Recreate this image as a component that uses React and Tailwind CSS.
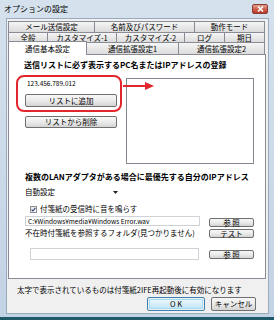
import React from "react";

const btn =
  "flex items-center justify-center border border-[#707070] rounded-[2px] bg-linear-to-b from-[#f7f7f7] via-[#ebebeb] to-[#d4d4d4] leading-none";
const tabOff =
  "flex items-center justify-center border-t border-r border-[#898c95] bg-linear-to-b from-[#f5f5f5] to-[#dcdcdc] leading-none";

function Tab({ className, children }) {
  return <div className={`${tabOff} ${className}`}>{children}</div>;
}

export default function App() {
  return (
    <div className="w-[274px] h-[320px] flex flex-col overflow-hidden bg-linear-to-b from-[#d5e1ed] to-[#c2d3e5] text-black text-[7.5px] font-['Noto_Sans_CJK_JP','Noto_Sans_CJK_SC',sans-serif]">
      {/* title bar */}
      <div className="h-[18px] flex items-start pl-[4px] pr-[6px]">
        <span className="mt-[3px] text-[8px] leading-[12px]">オプションの設定</span>
        <div className="ml-auto mt-[4px] w-[16px] h-[10px] rounded-[2px] border border-[#8a3a30] bg-linear-to-b from-[#e2a08f] via-[#d0624f] to-[#b83b28] flex items-center justify-center">
          <svg width="7" height="6" viewBox="0 0 7 6">
            <path d="M1 0.5 L6 5.5 M6 0.5 L1 5.5" stroke="white" strokeWidth="1.6" />
          </svg>
        </div>
      </div>

      {/* client area */}
      <div className="h-[296px] ml-[6px] mr-[5px] border border-[#9aabbd] bg-[#f0f0f0] flex flex-col">
        <div className="pt-[2px] pl-[1px] flex flex-col">
          <div className="flex h-[11px]">
            <Tab className="w-[87px] border-l">メール送信設定</Tab>
            <Tab className="w-[100px]">名前及びパスワード</Tab>
            <Tab className="w-[70px]">動作モード</Tab>
          </div>
          <div className="flex h-[10px]">
            <Tab className="w-[40px] border-l">全般</Tab>
            <Tab className="w-[69px]">カスタマイズ-1</Tab>
            <Tab className="w-[68px]">カスタマイズ-2</Tab>
            <Tab className="w-[40px]">ログ</Tab>
            <Tab className="w-[40px]">期日</Tab>
          </div>
          <div className="flex h-[12px] items-end">
            <div className="relative z-10 w-[79px] h-[14px] -mb-px bg-white border-t border-l border-r border-[#898c95] flex items-center justify-center leading-none">
              通信基本設定
            </div>
            <Tab className="w-[92px] h-[12px]">通信拡張設定1</Tab>
            <Tab className="w-[86px] h-[12px]">通信拡張設定2</Tab>
          </div>
        </div>

        {/* tab page */}
        <div className="relative ml-[1px] mr-[2px] h-[225px] border border-[#898c95] bg-white flex flex-col">
          <div className="mt-[4px] pl-[15px] leading-[11px] text-[8px] font-bold whitespace-nowrap">
            送信リストに必ず表示するPC名またはIPアドレスの登録
          </div>
          <div className="mt-[8px] flex">
            <div className="ml-[13px] w-[95px] flex flex-col">
              <div className="h-[12px] flex items-center pl-[5px] text-[6.5px]">123.456.789.012</div>
              <div className={`${btn} mt-[4px] h-[13px] ml-[3px]`}>リストに追加</div>
              <div className={`${btn} mt-[9px] h-[12px] ml-[3px]`}>リストから削除</div>
            </div>
            <div className="ml-[9px] w-[128px] h-[86px] border border-[#828790] bg-white" />
          </div>

          <div className="mt-[7px] pl-[16px] leading-[11px] text-[8px] font-bold whitespace-nowrap">
            複数のLANアダプタがある場合に最優先する自分のIPアドレス
          </div>
          <div className="mt-[5px] ml-[16px] w-[95px] h-[10px] flex items-center">
            <span className="leading-none">自動設定</span>
            <svg className="ml-auto mr-[2px]" width="5" height="3" viewBox="0 0 5 3">
              <path d="M0 0 H5 L2.5 3 Z" fill="#222" />
            </svg>
          </div>

          <div className="mt-[7px] ml-[21px] h-[10px] flex items-center gap-[3px]">
            <div className="w-[7px] h-[7px] border border-[#8e8f8f] bg-linear-to-br from-[#dfe6ee] to-white flex items-center justify-center">
              <svg width="5" height="5" viewBox="0 0 5 5">
                <path d="M0.6 2.6 L2 4 L4.4 0.8" stroke="#2a3f7a" strokeWidth="1.1" fill="none" />
              </svg>
            </div>
            <span className="leading-none">付箋紙の受信時に音を鳴らす</span>
          </div>

          <div className="mt-[2px] ml-[16px] flex items-start">
            <div className="w-[175px] h-[10px] border border-[#cfd3d8] flex items-center pl-[2px] text-[6.5px] leading-none whitespace-nowrap">
              C:¥Windows¥media¥Windows Error.wav
            </div>
            <div className={`${btn} ml-[9px] mt-[2px] w-[45px] h-[9px]`}>参 照</div>
          </div>
          <div className="ml-[16px] h-[11px] flex items-start">
            <span className="w-[175px] leading-[11px] whitespace-nowrap">不在時付箋紙を参照するフォルダ(見つかりません)</span>
            <div className={`${btn} ml-[9px] mt-[2px] w-[45px] h-[9px]`}>テスト</div>
          </div>
          <div className="mt-[10px] ml-[21px] flex items-start">
            <div className="w-[169px] h-[12px] border border-[#cfd3d8]" />
            <div className={`${btn} ml-[10px] mt-[2px] w-[45px] h-[9px]`}>参 照</div>
          </div>

          {/* annotation */}
          <div className="absolute left-[7px] top-[20px] w-[106px] h-[37px] border-2 border-[#e3262b] rounded-[8px]" />
          <svg className="absolute left-[114px] top-[27px]" width="32" height="8" viewBox="0 0 32 8">
            <path d="M0 4 H24" stroke="#e3262b" strokeWidth="2" />
            <path d="M22 0 L31 4 L22 8 Z" fill="#e3262b" />
          </svg>
        </div>

        <div className="mt-[5px] pl-[10px] leading-[11px] whitespace-nowrap">
          太字で表示されているものは付箋紙2IFE再起動後に有効になります
        </div>
        <div className="mt-[2px] flex justify-end pr-[12px] gap-[6px]">
          <div className="w-[58px] h-[14px] rounded-[2px] border border-[#3c7fb1] p-px">
            <div className="w-full h-full rounded-[1px] border border-[#9fdcf5] bg-linear-to-b from-[#eaf6fd] to-[#c4e5f6] flex items-center justify-center leading-none">
              O K
            </div>
          </div>
          <div className={`${btn} w-[45px] h-[14px]`}>キャンセル</div>
        </div>
      </div>
      <div className="h-[3px]" />
      <div className="h-[3px] bg-[#1f5a6a]" />
    </div>
  );
}
